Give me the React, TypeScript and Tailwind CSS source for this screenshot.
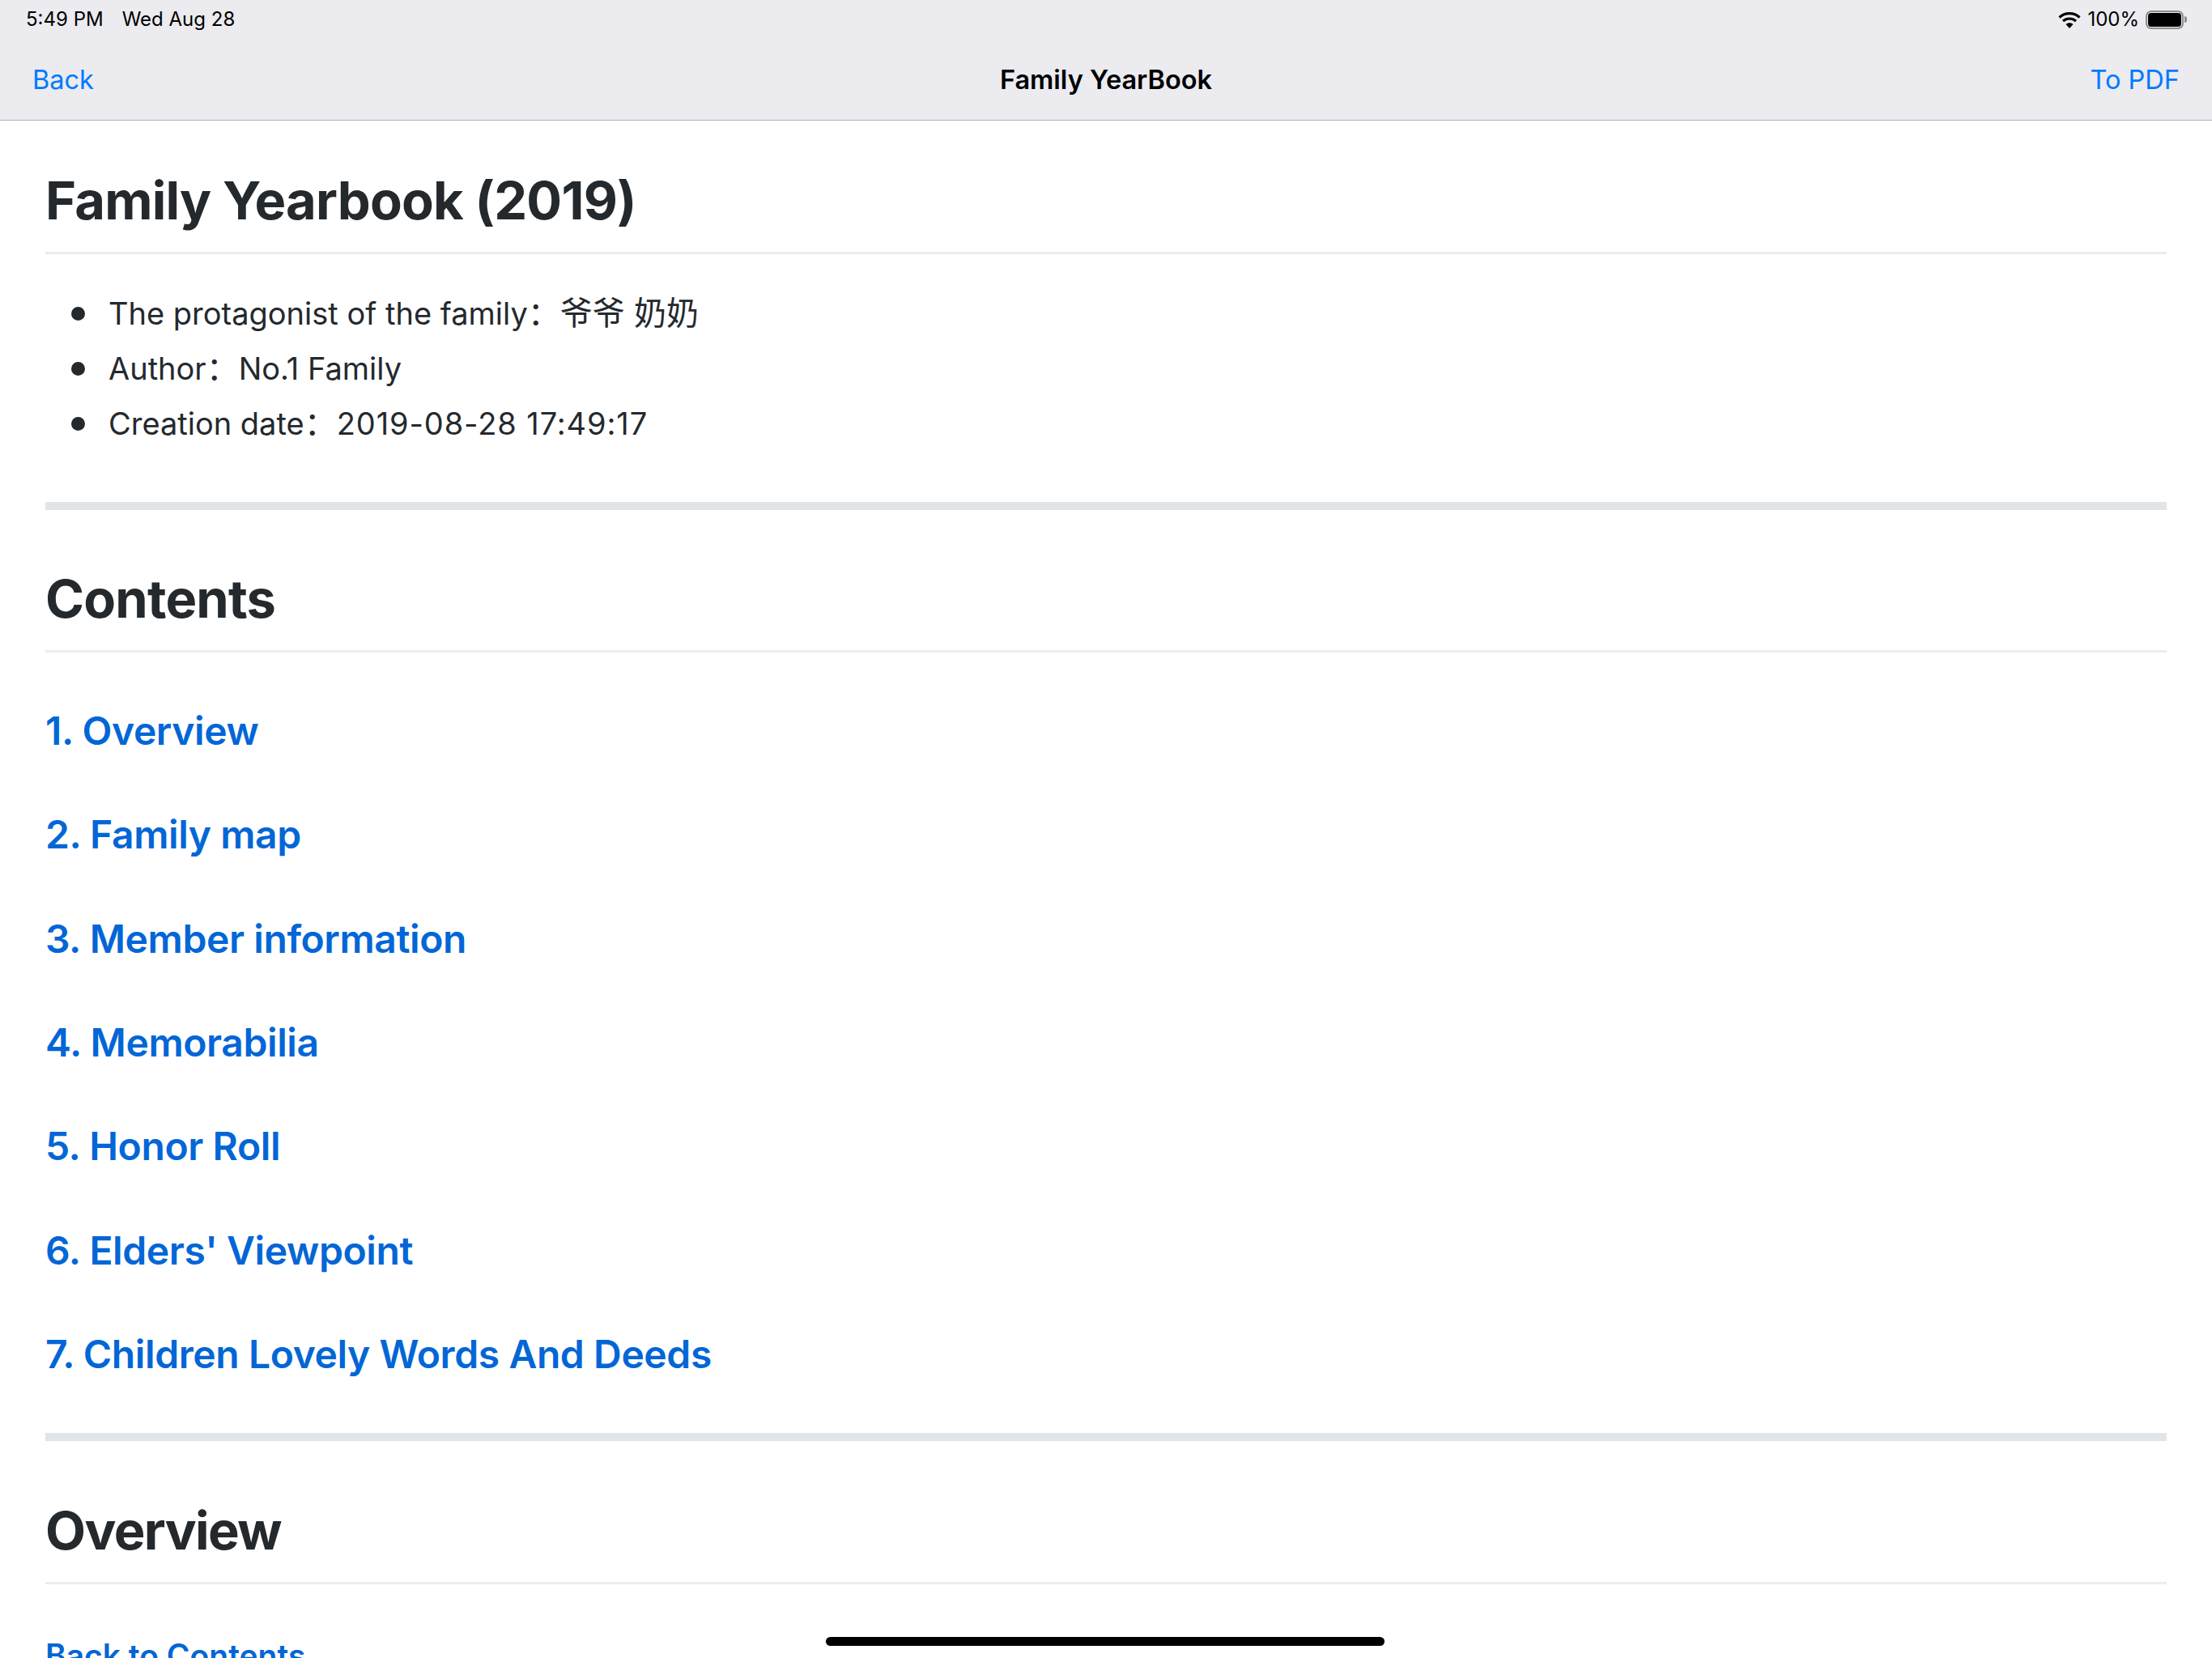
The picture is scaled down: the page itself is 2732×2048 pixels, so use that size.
const contents = [
  '1. Overview',
  '2. Family map',
  '3. Member information',
  '4. Memorabilia',
  '5. Honor Roll',
  "6. Elders' Viewpoint",
  '7. Children Lovely Words And Deeds',
];

function WifiIcon() {
  return (
    <svg width="28" height="21" viewBox="0 0 28 21" fill="none">
      <path d="M1.5 7.5C8.5 1 19.5 1 26.5 7.5" stroke="#000" strokeWidth="3.2" />
      <path d="M6 12C10.5 8 17.5 8 22 12" stroke="#000" strokeWidth="3.2" />
      <path d="M14 21L9.5 16C12 13.8 16 13.8 18.5 16Z" fill="#000" />
    </svg>
  );
}

function Battery() {
  return (
    <div className="flex items-center">
      <div className="h-[23px] w-[47px] rounded-[7px] border-2 border-[#8e8e90] p-[1px]">
        <div className="h-full w-full rounded-[4px] bg-black" />
      </div>
      <div className="ml-[1px] h-[8px] w-[3px] rounded-r-full bg-[#8e8e90]" />
    </div>
  );
}

function TopBar() {
  return (
    <header className="h-[149px] border-b border-b-[#b2b2b2] bg-[#ebebf0]">
      <div className="flex h-[48px] items-center justify-between pl-[32px] pr-[31px] text-[24px] text-black">
        <div className="flex gap-[23px]">
          <span>5:49 PM</span>
          <span>Wed Aug 28</span>
        </div>
        <div className="flex items-center gap-[8px]">
          <WifiIcon />
          <span>100%</span>
          <Battery />
        </div>
      </div>
      <div className="grid h-[100px] grid-cols-3 items-center px-[40px] pt-[2px] text-[32.5px] text-[#007aff]">
        <span>Back</span>
        <span className="text-center font-semibold text-black">Family YearBook</span>
        <span className="text-right">To PDF</span>
      </div>
    </header>
  );
}

function Bullet({ children }: { children: React.ReactNode }) {
  return (
    <li className="flex items-center gap-[29px]">
      <span className="h-[17px] w-[17px] rounded-full bg-[#24292e]" />
      <span>{children}</span>
    </li>
  );
}

export default function App() {
  return (
    <div className="relative h-[2048px] w-[2732px] overflow-hidden bg-white font-['Inter','Noto_Sans_CJK_SC',sans-serif] text-[#24292e]">
      <TopBar />
      <main className="px-[56px]">
        <h1 className="mt-[54px] border-b-[3px] border-b-[#eaecef] pb-[19px] text-[65px] leading-[89px] font-[650] tracking-[-0.8px]">
          Family Yearbook (2019)
        </h1>
        <ul className="mt-[45px] flex flex-col gap-[12px] pl-[32px] text-[38px] leading-[56px]">
          <Bullet>
            The protagonist of the family<span className="text-[40px]">：爷爷 奶奶</span>
          </Bullet>
          <Bullet>
            Author<span className="text-[40px]">：</span>No.1 Family
          </Bullet>
          <Bullet>
            Creation date<span className="text-[40px]">：</span>
            <span className="tracking-[0.9px]">2019-08-28 17:49:17</span>
          </Bullet>
        </ul>
        <div className="mt-[69px] h-[10px] bg-[#e1e4e8]" />
        <h2 className="mt-[69px] border-b-[3px] border-b-[#eaecef] pb-[22px] text-[65px] leading-[82px] font-[650] tracking-[-0.8px]">
          Contents
        </h2>
        <div className="mt-[33px] flex flex-col">
          {contents.map((item) => (
            <a key={item} className="flex h-[128.3px] items-center text-[48px] font-semibold tracking-[-0.4px] text-[#0366d6]">
              {item}
            </a>
          ))}
        </div>
        <div className="mt-[33px] h-[10px] bg-[#e1e4e8]" />
        <h2 className="mt-[70px] border-b-[3px] border-b-[#eaecef] pb-[22px] text-[65px] leading-[82px] font-[650] tracking-[-1.6px]">
          Overview
        </h2>
        <a className="mt-[60px] block text-[39px] leading-[56px] font-semibold text-[#0366d6]">Back to Contents</a>
      </main>
      <div className="absolute bottom-[15px] left-[1020px] h-[11px] w-[690px] rounded-full bg-black" />
    </div>
  );
}
